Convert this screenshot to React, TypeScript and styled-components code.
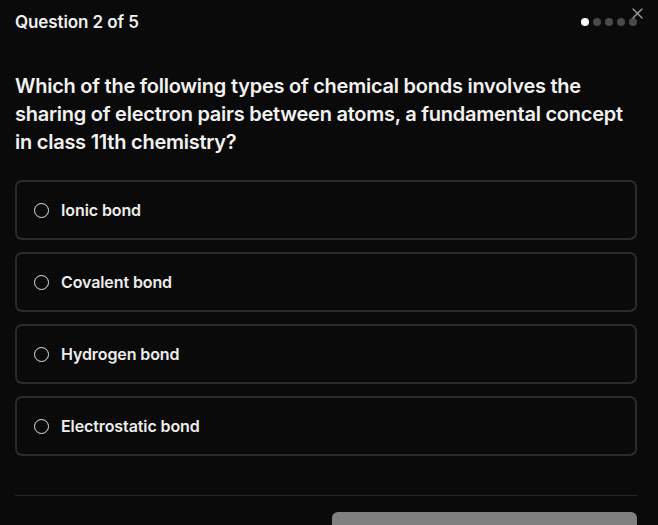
import React, { useState } from "react";
import styled, { createGlobalStyle } from "styled-components";

const GlobalStyle = createGlobalStyle`
  html, body {
    margin: 0;
    padding: 0;
    background: #0a0a0a;
  }
  body {
    font-family: Inter, "Noto Sans", "Liberation Sans", sans-serif;
    color: #f2f2f2;
  }
`;

const options = ["Ionic bond", "Covalent bond", "Hydrogen bond", "Electrostatic bond"];

function App() {
  const [selected, setSelected] = useState<number | null>(null);

  return (
    <>
      <GlobalStyle />
      <Container>
        <CloseButton aria-label="close">
          <svg width="11" height="11" viewBox="0 0 11 11">
            <path d="M1 1 L10 10 M10 1 L1 10" stroke="#a3a3a3" strokeWidth="1.3" strokeLinecap="round" />
          </svg>
        </CloseButton>
        <Header>
          <Title>Question 2 of 5</Title>
          <Dots>
            {[0, 1, 2, 3, 4].map((i) => (
              <Dot key={i} active={i === 0} />
            ))}
          </Dots>
        </Header>
        <Question>
          Which of the following types of chemical bonds involves the sharing of electron pairs between
          atoms, a fundamental concept in class 11th chemistry?
        </Question>
        <Options>
          {options.map((opt, i) => (
            <Option key={opt} onClick={() => setSelected(i)}>
              <Radio checked={selected === i} />
              <span>{opt}</span>
            </Option>
          ))}
        </Options>
        <Divider />
        <Footer>
          <NextButton disabled={selected === null}>Next</NextButton>
        </Footer>
      </Container>
    </>
  );
}

export default App;

const Container = styled.div`
  position: relative;
  padding: 0 21px 0 15px;
  height: 525px;
  overflow: hidden;
  box-sizing: border-box;
`;

const CloseButton = styled.button`
  position: absolute;
  top: 8px;
  right: 15px;
  background: none;
  border: none;
  padding: 0;
  width: 11px;
  height: 11px;
  display: flex;
  cursor: pointer;
`;

const Header = styled.div`
  display: flex;
  align-items: center;
  justify-content: space-between;
  height: 44px;
`;

const Title = styled.h2`
  margin: 0;
  font-size: 17px;
  font-weight: 600;
  letter-spacing: -0.1px;
  color: #f0f0f0;
`;

const Dots = styled.div`
  display: flex;
  gap: 4px;
`;

const Dot = styled.span<{ active: boolean }>`
  width: 8px;
  height: 8px;
  border-radius: 50%;
  background: ${({ active }) => (active ? "#ffffff" : "#4a4a4a")};
`;

const Question = styled.p`
  margin: 28px 0 24px;
  font-size: 20px;
  line-height: 28px;
  font-weight: 600;
  letter-spacing: -0.25px;
  color: #f2f2f2;
  width: 628px;
`;

const Options = styled.div`
  display: flex;
  flex-direction: column;
  gap: 12px;
  width: 622px;
`;

const Option = styled.div`
  display: flex;
  align-items: center;
  gap: 12px;
  height: 60px;
  box-sizing: border-box;
  padding: 0 17px;
  border: 2px solid #2b2b2b;
  border-radius: 7px;
  font-size: 16px;
  font-weight: 600;
  letter-spacing: -0.1px;
  color: #ededed;
  cursor: pointer;
`;

const Radio = styled.span<{ checked: boolean }>`
  width: 15px;
  height: 15px;
  box-sizing: border-box;
  border-radius: 50%;
  border: 1.5px solid #e5e5e5;
  background: ${({ checked }) => (checked ? "#e5e5e5" : "transparent")};
  flex-shrink: 0;
`;

const Divider = styled.hr`
  margin: 39px 0 0;
  width: 622px;
  border: none;
  height: 1px;
  background: #262626;
`;

const Footer = styled.div`
  display: flex;
  justify-content: flex-end;
  width: 622px;
  padding-top: 16px;
`;

const NextButton = styled.button`
  width: 305px;
  height: 42px;
  border: none;
  border-radius: 6px;
  background: #808080;
  color: #1a1a1a;
  font-family: inherit;
  font-size: 15px;
  font-weight: 600;
`;
